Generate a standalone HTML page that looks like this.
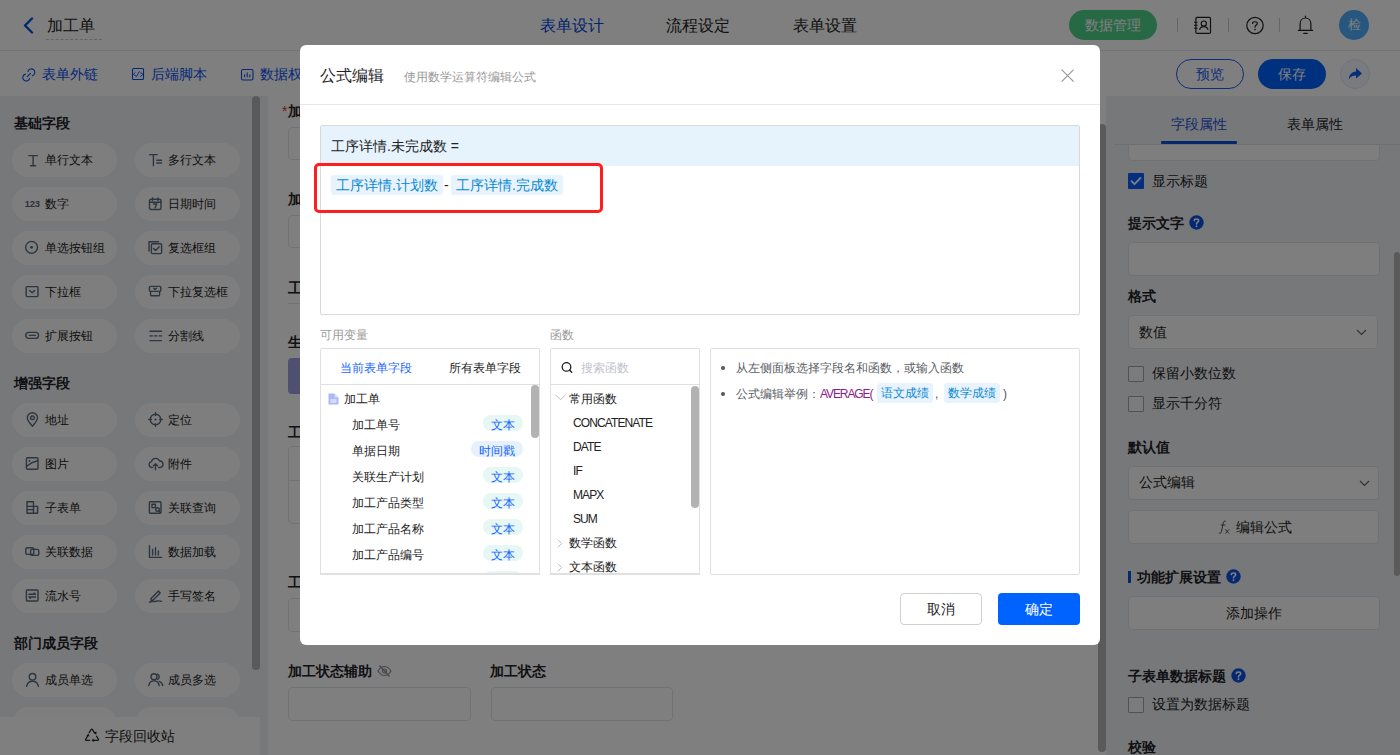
<!DOCTYPE html>
<html><head><meta charset="utf-8">
<style>
*{box-sizing:border-box;margin:0;padding:0}
html,body{width:1400px;height:755px;overflow:hidden;background:#fff;font-family:"Liberation Sans",sans-serif;color:#222}
.a{position:absolute;white-space:nowrap}
svg{display:block}
#hdr{position:absolute;left:0;top:0;width:1400px;height:51px;background:#fff;border-bottom:1px solid #e8e8e8}
#tb{position:absolute;left:0;top:51px;width:1400px;height:45px;background:#fff}
#side{position:absolute;left:0;top:96px;width:268px;height:659px;background:#eff1f5}
#canvas{position:absolute;left:268px;top:96px;width:838px;height:659px;background:#fff}
#rp{position:absolute;left:1106px;top:96px;width:294px;height:659px;background:#eff1f5}
#mask{position:absolute;left:0;top:0;width:1400px;height:755px;background:rgba(0,0,0,.5)}
#modal{position:absolute;left:300px;top:45px;width:800px;height:600px;background:#fff;border-radius:6px}
.pill{position:absolute;width:105px;height:34px;border-radius:17px;background:#fdfdfd}
.pill .ic{position:absolute;left:13px;top:9px;width:16px;height:16px}
.pill .t{position:absolute;left:33px;top:0;line-height:34px;font-size:12px;color:#1a1a1a}
.sh{position:absolute;left:14px;font-size:14px;font-weight:bold;color:#1f2329;line-height:20px}
</style></head><body>
<div id="hdr">
<svg class="a" style="left:22px;top:17px" width="12" height="17" viewBox="0 0 12 17"><path d="M10 1.5 L3 8.5 L10 15.5" fill="none" stroke="#0050e0" stroke-width="2.4" stroke-linecap="round" stroke-linejoin="round"/></svg>
<div class="a" style="left:47px;top:14px;font-size:16px;line-height:24px;color:#222">加工单</div>
<div class="a" style="left:46px;top:39px;width:56px;border-top:1px dashed #c8c8c8"></div>
<div class="a" style="left:540px;top:14px;font-size:16px;line-height:24px;color:#0046d8">表单设计</div>
<div class="a" style="left:666px;top:14px;font-size:16px;line-height:24px;color:#222">流程设定</div>
<div class="a" style="left:793px;top:14px;font-size:16px;line-height:24px;color:#222">表单设置</div>
<div class="a" style="left:1069px;top:10px;width:88px;height:30px;border-radius:15px;background:#4fd18b;color:#fff;font-size:14px;line-height:30px;text-align:center">数据管理</div>
<div class="a" style="left:1177px;top:18px;width:1px;height:14px;background:#ccc"></div>
<div class="a" style="left:1228px;top:18px;width:1px;height:14px;background:#ccc"></div>
<div class="a" style="left:1279px;top:18px;width:1px;height:14px;background:#ccc"></div>
<svg class="a" style="left:1192px;top:16px" width="20" height="19" viewBox="0 0 20 19"><rect x="3.9" y="1.4" width="14.6" height="16" rx="1.2" fill="none" stroke="#222" stroke-width="1.2"/><circle cx="11.8" cy="7.6" r="2.6" fill="none" stroke="#222" stroke-width="1.2"/><path d="M7.6 13.9C8 11.3 9.8 10.6 11.8 10.6S15.6 11.3 16 13.9" fill="none" stroke="#222" stroke-width="1.2"/><path d="M2 6.2h3.6M2 9.3h3.6M2 12.2h3.6" stroke="#222" stroke-width="1.1"/></svg>
<svg class="a" style="left:1245px;top:16px" width="19" height="19" viewBox="0 0 19 19"><circle cx="10" cy="9.5" r="8.2" fill="none" stroke="#222" stroke-width="1.2"/><path d="M7.6 7.4C7.6 5.2 12.3 5.2 12.3 7.4 12.3 9 10 9.2 10 11.2" fill="none" stroke="#222" stroke-width="1.2" stroke-linecap="round"/><circle cx="10" cy="13.6" r="0.8" fill="#222"/></svg>
<svg class="a" style="left:1297px;top:15px" width="17" height="20" viewBox="0 0 17 20"><path d="M8.5 1.2v1.4M3.1 15V8.8C3.1 5.3 5.5 3 8.5 3S13.9 5.3 13.9 8.8V15M1.4 15.4h14.2M6.8 18.4h3.4" fill="none" stroke="#222" stroke-width="1.2" stroke-linecap="round"/></svg>
<div class="a" style="left:1339px;top:10px;width:30px;height:30px;border-radius:15px;background:#4eaefc;color:#fff;font-size:13px;line-height:30px;text-align:center">检</div>
</div>
<div id="tb">
<svg class="a" style="left:22px;top:16px" width="15" height="16" viewBox="0 0 15 16"><path d="M5.92 4.49A3.5 3.5 0 1 1 10.21 8.78M7.68 11.41A3.5 3.5 0 1 1 3.39 7.12M5.2 9.6L8.4 6.3" fill="none" stroke="#0a50f0" stroke-width="1.1" stroke-linecap="round"/></svg>
<div class="a" style="left:42px;top:13px;font-size:14px;line-height:20px;color:#0a50f0">表单外链</div>
<svg class="a" style="left:131px;top:15px" width="14" height="15" viewBox="0 0 14 15"><rect x="1.5" y="2.5" width="11" height="11" rx="1" fill="none" stroke="#0a50f0" stroke-width="1.1"/><path d="M4.5 6.3L2.3 8.4 5.5 10.5 8.5 5.2M9.3 6.5L12 8.4 9.3 10.5" fill="none" stroke="#0a50f0" stroke-width="0.9" stroke-linejoin="round"/></svg>
<div class="a" style="left:151px;top:13px;font-size:14px;line-height:20px;color:#0a50f0">后端脚本</div>
<svg class="a" style="left:240px;top:15px" width="14" height="15" viewBox="0 0 14 15"><rect x="1.5" y="3.5" width="11.5" height="10.5" rx="1.5" fill="none" stroke="#0a50f0" stroke-width="1.1"/><path d="M4.6 11.2V8.4M7.2 11.2V6.4M9.8 11.2V8.4" stroke="#0a50f0" stroke-width="1.1"/></svg>
<div class="a" style="left:260px;top:13px;font-size:14px;line-height:20px;color:#0a50f0">数据权限</div>
<div class="a" style="left:1176px;top:8px;width:68px;height:30px;border-radius:15px;border:1px solid #1e5cf0;color:#1e5cf0;font-size:14px;line-height:28px;text-align:center">预览</div>
<div class="a" style="left:1258px;top:8px;width:68px;height:30px;border-radius:15px;background:#0062ff;color:#fff;font-size:14px;line-height:30px;text-align:center">保存</div>
<div class="a" style="left:1340px;top:8px;width:30px;height:30px;border-radius:15px;border:1px solid #dfe6f5;background:#f3f6fd"></div>
<svg class="a" style="left:1347px;top:15px" width="16" height="16" viewBox="0 0 16 16"><path d="M9 2 L15 7.5 L9 12.5 V9.5 C5.5 9.5 3.5 10.5 1.8 13.5 C2 9 4.5 5.8 9 5.5 Z" fill="#0b5ef5"/></svg>
</div>
<div id="side">
<div class="sh" style="top:17px">基础字段</div>
<div class="sh" style="top:277px">增强字段</div>
<div class="sh" style="top:537px">部门成员字段</div>
<div class="pill" style="left:12px;top:47px"><svg class="ic" viewBox="0 0 16 16"><path d="M3.8 3.6h8.6M8.1 3.6v10.2M5.6 13.8h5" fill="none" stroke="#5b6a7e" stroke-width="1.4" stroke-linecap="round" stroke-linejoin="round"/></svg><div class="t">单行文本</div></div>
<div class="pill" style="left:135px;top:47px"><svg class="ic" viewBox="0 0 16 16"><path d="M1.6 2.6h7.6M5.4 2.6v11.2M8.8 8.2h4.8M8.8 11h4.8" fill="none" stroke="#5b6a7e" stroke-width="1.4" stroke-linecap="round" stroke-linejoin="round"/></svg><div class="t">多行文本</div></div>
<div class="pill" style="left:12px;top:91px"><svg class="ic" viewBox="0 0 16 16"><text x="-0.2" y="11" font-family="Liberation Sans" font-weight="bold" font-size="9.4" fill="#56657a" letter-spacing="-0.3">123</text></svg><div class="t">数字</div></div>
<div class="pill" style="left:135px;top:91px"><svg class="ic" viewBox="0 0 16 16"><rect x="1.5" y="3.3" width="11.5" height="10.2" rx="1.5" fill="none" stroke="#5b6a7e" stroke-width="1.4" stroke-linecap="round" stroke-linejoin="round"/><path d="M4.5 2v2.6M10 2v2.6M1.5 6.2h11.5M5.5 8h3.2l-1.6 3.8" fill="none" stroke="#5b6a7e" stroke-width="1.4" stroke-linecap="round" stroke-linejoin="round"/></svg><div class="t">日期时间</div></div>
<div class="pill" style="left:12px;top:135px"><svg class="ic" viewBox="0 0 16 16"><circle cx="6.6" cy="7.3" r="5.9" fill="none" stroke="#5b6a7e" stroke-width="1.4" stroke-linecap="round" stroke-linejoin="round"/><circle cx="6.6" cy="7.3" r="1.4" fill="#56657a"/></svg><div class="t">单选按钮组</div></div>
<div class="pill" style="left:135px;top:135px"><svg class="ic" viewBox="0 0 16 16"><path d="M1 11V1.8h9.5" fill="none" stroke="#5b6a7e" stroke-width="1.4" stroke-linecap="round" stroke-linejoin="round"/><rect x="3.4" y="3.8" width="10.2" height="9.8" rx="1" fill="none" stroke="#5b6a7e" stroke-width="1.4" stroke-linecap="round" stroke-linejoin="round"/><path d="M5.6 8.5l2 2 3.6-3.8" fill="none" stroke="#5b6a7e" stroke-width="1.4" stroke-linecap="round" stroke-linejoin="round"/></svg><div class="t">复选框组</div></div>
<div class="pill" style="left:12px;top:179px"><svg class="ic" viewBox="0 0 16 16"><rect x="1.2" y="2.6" width="11.8" height="10" rx="1" fill="none" stroke="#5b6a7e" stroke-width="1.4" stroke-linecap="round" stroke-linejoin="round"/><path d="M4.6 6.4l2.5 2.4 2.5-2.4" fill="none" stroke="#5b6a7e" stroke-width="1.4" stroke-linecap="round" stroke-linejoin="round"/></svg><div class="t">下拉框</div></div>
<div class="pill" style="left:135px;top:179px"><svg class="ic" viewBox="0 0 16 16"><rect x="1.4" y="2.4" width="11.4" height="5" rx="1" fill="none" stroke="#5b6a7e" stroke-width="1.4" stroke-linecap="round" stroke-linejoin="round"/><path d="M2.6 7.4v3.6c0 .5.3.8.8.8h7.4c.5 0 .8-.3.8-.8V7.4" fill="none" stroke="#5b6a7e" stroke-width="1.4" stroke-linecap="round" stroke-linejoin="round"/><path d="M5.8 4.2l1.3 1.3 1.3-1.3" fill="none" stroke="#5b6a7e" stroke-width="1.4" stroke-linecap="round" stroke-linejoin="round"/></svg><div class="t">下拉复选框</div></div>
<div class="pill" style="left:12px;top:223px"><svg class="ic" viewBox="0 0 16 16"><rect x="0.8" y="4.4" width="12.8" height="6" rx="3" fill="none" stroke="#5b6a7e" stroke-width="1.4" stroke-linecap="round" stroke-linejoin="round"/><path d="M4.3 7.4h6" fill="none" stroke="#5b6a7e" stroke-width="1.4" stroke-linecap="round" stroke-linejoin="round"/></svg><div class="t">扩展按钮</div></div>
<div class="pill" style="left:135px;top:223px"><svg class="ic" viewBox="0 0 16 16"><path d="M2 3.2h11.5M2 12.6h11.5M2 7.9h2.4M6.6 7.9h2.3M11.1 7.9h2.4" fill="none" stroke="#5b6a7e" stroke-width="1.4" stroke-linecap="round" stroke-linejoin="round"/></svg><div class="t">分割线</div></div>
<div class="pill" style="left:12px;top:307px"><svg class="ic" viewBox="0 0 16 16"><path d="M7.4 14.2C4.5 11 2.3 8.5 2.3 5.8a5.1 5.1 0 0 1 10.2 0c0 2.7-2.2 5.2-5.1 8.4z" fill="none" stroke="#5b6a7e" stroke-width="1.4" stroke-linecap="round" stroke-linejoin="round"/><circle cx="7.4" cy="5.8" r="1.8" fill="none" stroke="#5b6a7e" stroke-width="1.4" stroke-linecap="round" stroke-linejoin="round"/></svg><div class="t">地址</div></div>
<div class="pill" style="left:135px;top:307px"><svg class="ic" viewBox="0 0 16 16"><circle cx="7.5" cy="7.5" r="5.3" fill="none" stroke="#5b6a7e" stroke-width="1.4" stroke-linecap="round" stroke-linejoin="round"/><path d="M7.5 0.8v2.6M7.5 11.6v2.6M0.8 7.5h2.6M11.6 7.5h2.6" fill="none" stroke="#5b6a7e" stroke-width="1.4" stroke-linecap="round" stroke-linejoin="round"/><circle cx="7.5" cy="7.5" r="1" fill="#56657a"/></svg><div class="t">定位</div></div>
<div class="pill" style="left:12px;top:351px"><svg class="ic" viewBox="0 0 16 16"><rect x="1.4" y="1.8" width="11.6" height="11.4" rx="1.2" fill="none" stroke="#5b6a7e" stroke-width="1.4" stroke-linecap="round" stroke-linejoin="round"/><path d="M1.6 10.4C4.5 8 6 6 12.8 4.8" fill="none" stroke="#5b6a7e" stroke-width="1.4" stroke-linecap="round" stroke-linejoin="round"/><circle cx="4.5" cy="5" r="0.9" fill="#56657a"/></svg><div class="t">图片</div></div>
<div class="pill" style="left:135px;top:351px"><svg class="ic" viewBox="0 0 16 16"><path d="M4.5 11.5H3.8A3 3 0 0 1 3.5 5.6 4.2 4.2 0 0 1 11.5 5a3.2 3.2 0 0 1 .4 6.5h-1.2M7.5 13.8V8M5.4 9.8l2.1-2 2.1 2" fill="none" stroke="#5b6a7e" stroke-width="1.4" stroke-linecap="round" stroke-linejoin="round"/></svg><div class="t">附件</div></div>
<div class="pill" style="left:12px;top:395px"><svg class="ic" viewBox="0 0 16 16"><path d="M2 1.8h6.5v4.6H2zM2 6.4h10.6v6.8H2zM2 9.6h6.5M8.5 6.4v6.8" fill="none" stroke="#5b6a7e" stroke-width="1.4" stroke-linecap="round" stroke-linejoin="round"/></svg><div class="t">子表单</div></div>
<div class="pill" style="left:135px;top:395px"><svg class="ic" viewBox="0 0 16 16"><rect x="1.4" y="1.8" width="11.6" height="11.4" rx="1" fill="none" stroke="#5b6a7e" stroke-width="1.4" stroke-linecap="round" stroke-linejoin="round"/><path d="M4 4.2h3.4v3.4H4z" fill="none" stroke="#5b6a7e" stroke-width="1.4" stroke-linecap="round" stroke-linejoin="round"/><circle cx="9.5" cy="9.6" r="1.8" fill="none" stroke="#5b6a7e" stroke-width="1.4" stroke-linecap="round" stroke-linejoin="round"/><path d="M10.8 10.9l1.6 1.6" fill="none" stroke="#5b6a7e" stroke-width="1.4" stroke-linecap="round" stroke-linejoin="round"/></svg><div class="t">关联查询</div></div>
<div class="pill" style="left:12px;top:439px"><svg class="ic" viewBox="0 0 16 16"><rect x="0.8" y="3.8" width="8" height="6.6" rx="1.5" fill="none" stroke="#5b6a7e" stroke-width="1.4" stroke-linecap="round" stroke-linejoin="round"/><rect x="5.6" y="5.4" width="8.2" height="6" rx="1.5" fill="none" stroke="#5b6a7e" stroke-width="1.4" stroke-linecap="round" stroke-linejoin="round"/></svg><div class="t">关联数据</div></div>
<div class="pill" style="left:135px;top:439px"><svg class="ic" viewBox="0 0 16 16"><path d="M1.5 1.8v11.6h12.2M4.6 11V5.5M7.5 11V3.6M10.4 11V7" fill="none" stroke="#5b6a7e" stroke-width="1.4" stroke-linecap="round" stroke-linejoin="round"/></svg><div class="t">数据加载</div></div>
<div class="pill" style="left:12px;top:483px"><svg class="ic" viewBox="0 0 16 16"><rect x="1.4" y="2" width="11.6" height="11" rx="1" fill="none" stroke="#5b6a7e" stroke-width="1.4" stroke-linecap="round" stroke-linejoin="round"/><path d="M3.8 6.2h6.6l-1.3-1.3M10.6 9h-6.6l1.3 1.3" fill="none" stroke="#5b6a7e" stroke-width="1.4" stroke-linecap="round" stroke-linejoin="round"/></svg><div class="t">流水号</div></div>
<div class="pill" style="left:135px;top:483px"><svg class="ic" viewBox="0 0 16 16"><path d="M3 10.5l7.4-7.4 1.8 1.8-7.4 7.4H3zM1.5 14.2c2.5-1.5 4-.2 6-.8 1.5-.4 3-1 6 0" fill="none" stroke="#5b6a7e" stroke-width="1.4" stroke-linecap="round" stroke-linejoin="round"/></svg><div class="t">手写签名</div></div>
<div class="pill" style="left:12px;top:567px"><svg class="ic" viewBox="0 0 16 16"><circle cx="7.5" cy="4.8" r="3.3" fill="none" stroke="#5b6a7e" stroke-width="1.4" stroke-linecap="round" stroke-linejoin="round"/><path d="M1.6 14.3c.6-3.3 3-5.1 5.9-5.1s5.3 1.8 5.9 5.1" fill="none" stroke="#5b6a7e" stroke-width="1.4" stroke-linecap="round" stroke-linejoin="round"/></svg><div class="t">成员单选</div></div>
<div class="pill" style="left:135px;top:567px"><svg class="ic" viewBox="0 0 16 16"><circle cx="6" cy="4.8" r="3" fill="none" stroke="#5b6a7e" stroke-width="1.4" stroke-linecap="round" stroke-linejoin="round"/><path d="M0.8 13.6c.5-3 2.6-4.7 5.2-4.7s4.7 1.7 5.2 4.7M9.6 2.2a3 3 0 0 1 0 5.3M11.3 9.4c1.8.6 3 2 3.4 4.2" fill="none" stroke="#5b6a7e" stroke-width="1.4" stroke-linecap="round" stroke-linejoin="round"/></svg><div class="t">成员多选</div></div>
<div class="pill" style="left:12px;top:611px"><svg class="ic" viewBox="0 0 16 16"><circle cx="6" cy="4.8" r="3" fill="none" stroke="#5b6a7e" stroke-width="1.4" stroke-linecap="round" stroke-linejoin="round"/><path d="M0.8 13.6c.5-3 2.6-4.7 5.2-4.7s4.7 1.7 5.2 4.7M9.6 2.2a3 3 0 0 1 0 5.3M11.3 9.4c1.8.6 3 2 3.4 4.2" fill="none" stroke="#5b6a7e" stroke-width="1.4" stroke-linecap="round" stroke-linejoin="round"/></svg><div class="t">部门单选</div></div>
<div class="pill" style="left:135px;top:611px"><svg class="ic" viewBox="0 0 16 16"><circle cx="6" cy="4.8" r="3" fill="none" stroke="#5b6a7e" stroke-width="1.4" stroke-linecap="round" stroke-linejoin="round"/><path d="M0.8 13.6c.5-3 2.6-4.7 5.2-4.7s4.7 1.7 5.2 4.7M9.6 2.2a3 3 0 0 1 0 5.3M11.3 9.4c1.8.6 3 2 3.4 4.2" fill="none" stroke="#5b6a7e" stroke-width="1.4" stroke-linecap="round" stroke-linejoin="round"/></svg><div class="t">部门多选</div></div>
<div class="a" style="left:252px;top:0;width:8px;height:574px;border-radius:4px;background:#b4b4b4"></div>
<div class="a" style="left:0;top:621px;width:260px;height:38px;background:#fff"></div>
<svg class="a" style="left:83px;top:630px" width="18" height="17" viewBox="0 0 18 17"><path d="M6.2 6.6L8.1 3.6Q8.8 2.6 9.5 3.6L11.6 7M13.6 10.2L15.4 13.3Q15.8 14.3 14.8 14.3L10.2 14.3M6.6 14.3L3.2 14.3Q2.2 14.3 2.7 13.3L4.8 9.8" fill="none" stroke="#222" stroke-width="1.2" stroke-linecap="round" stroke-linejoin="round"/><path d="M10.4 6.4L13.2 8.8 13.6 5.6z M10.6 12.4L8.6 14.3 10.6 16.2z M3.4 9.8L6.4 10.4 5.6 7.4z" fill="#222"/></svg>
<div class="a" style="left:105px;top:630px;font-size:14px;line-height:20px;color:#222">字段回收站</div>
</div>
<div id="canvas">
<div class="a" style="left:14px;top:5px;font-size:14px;line-height:20px;color:#e03030">*</div>
<div class="a" style="left:20px;top:5px;font-size:14px;line-height:20px;color:#1f2329;font-weight:bold">加工单号</div>
<div class="a" style="left:20px;top:31px;width:183px;height:33px;border:1px solid #e3e5e8;border-radius:4px;background:#fff"></div>
<div class="a" style="left:20px;top:93px;font-size:14px;line-height:20px;color:#1f2329;font-weight:bold">加工日期</div>
<div class="a" style="left:20px;top:119px;width:183px;height:33px;border:1px solid #e3e5e8;border-radius:4px;background:#fff"></div>
<div class="a" style="left:20px;top:181px;font-size:15px;line-height:22px;color:#1f2329;font-weight:bold">工序详情</div>
<div class="a" style="left:20px;top:207px;width:792px;height:1px;background:#e5e6eb"></div>
<div class="a" style="left:20px;top:236px;font-size:14px;line-height:20px;color:#1f2329;font-weight:bold">生产工序</div>
<div class="a" style="left:20px;top:262px;width:100px;height:36px;border-radius:4px;background:#9ea0e0"></div>
<div class="a" style="left:20px;top:326px;font-size:14px;line-height:20px;color:#1f2329;font-weight:bold">工序明细</div>
<div class="a" style="left:20px;top:350px;width:792px;height:78px;border:1px solid #e3e5e8;border-radius:4px;background:#fff"></div>
<div class="a" style="left:20px;top:384px;width:792px;height:1px;background:#e3e5e8"></div>
<div class="a" style="left:20px;top:476px;font-size:14px;line-height:20px;color:#1f2329;font-weight:bold">工序备注</div>
<div class="a" style="left:20px;top:502px;width:183px;height:34px;border:1px solid #e3e5e8;border-radius:4px;background:#fff"></div>
<div class="a" style="left:20px;top:565px;font-size:14px;line-height:20px;color:#1f2329;font-weight:bold">加工状态辅助</div>
<svg class="a" style="left:109px;top:568px" width="15" height="14" viewBox="0 0 15 14"><path d="M1 7C3 3.5 5 2.5 7.5 2.5S12 3.5 14 7C12 10.5 10 11.5 7.5 11.5S3 10.5 1 7z" fill="none" stroke="#8a8f99" stroke-width="1.2"/><circle cx="7.5" cy="7" r="2" fill="none" stroke="#8a8f99" stroke-width="1.2"/><path d="M2.5 1.5l10 11" stroke="#8a8f99" stroke-width="1.2"/></svg>
<div class="a" style="left:222px;top:565px;font-size:14px;line-height:20px;color:#1f2329;font-weight:bold">加工状态</div>
<div class="a" style="left:20px;top:591px;width:183px;height:34px;border:1px solid #e3e5e8;border-radius:4px;background:#fff"></div>
<div class="a" style="left:223px;top:591px;width:182px;height:34px;border:1px solid #e3e5e8;border-radius:4px;background:#fff"></div>
<div class="a" style="left:830px;top:28px;width:8px;height:628px;border-radius:4px;background:#b4b4b4"></div>
</div>
<div id="rp">
<div class="a" style="left:22px;top:4px;width:252px;height:61px;border:1px solid #e1e3e6;border-radius:4px;background:#fdfdfd"></div>
<div class="a" style="left:0;top:0;width:294px;height:48px;background:#eff1f5"></div>
<div class="a" style="left:65px;top:18px;font-size:14px;line-height:20px;color:#1a50d8">字段属性</div>
<div class="a" style="left:181px;top:18px;font-size:14px;line-height:20px;color:#222">表单属性</div>
<div class="a" style="left:8px;top:48px;width:286px;height:1px;background:#dcdee2"></div>
<div class="a" style="left:55px;top:45px;width:76px;height:3px;background:#0a4fd6;border-radius:1px"></div>
<div class="a" style="left:22px;top:77px;width:16px;height:16px;background:#0a5cff;border-radius:1px"></div>
<svg class="a" style="left:22px;top:77px" width="16" height="16" viewBox="0 0 16 16"><path d="M3.5 8.2l3 3 6-6.2" fill="none" stroke="#fff" stroke-width="1.8" stroke-linecap="round" stroke-linejoin="round"/></svg>
<div class="a" style="left:46px;top:75px;font-size:14px;line-height:20px;color:#222">显示标题</div>
<div class="a" style="left:22px;top:117px;font-size:14px;line-height:20px;color:#1f2329;font-weight:bold">提示文字</div>
<svg class="a" style="left:83px;top:119px" width="15" height="15" viewBox="0 0 15 15"><circle cx="7.5" cy="7.5" r="7.2" fill="#0a50e0"/><path d="M5.3 5.6C5.3 3.4 9.7 3.4 9.7 5.6 9.7 7.2 7.5 7.2 7.5 9" fill="none" stroke="#fff" stroke-width="1.6" stroke-linecap="round"/><circle cx="7.5" cy="11.2" r="0.95" fill="#fff"/></svg>
<div class="a" style="left:22px;top:146px;width:252px;height:34px;border:1px solid #e1e3e6;border-radius:4px;background:#fdfdfd"></div>
<div class="a" style="left:22px;top:190px;font-size:14px;line-height:20px;color:#1f2329;font-weight:bold">格式</div>
<div class="a" style="left:22px;top:219px;width:250px;height:34px;border:1px solid #e1e3e6;border-radius:4px;background:#fdfdfd"></div>
<div class="a" style="left:33px;top:226px;font-size:14px;line-height:20px;color:#222">数值</div>
<svg class="a" style="left:250px;top:233px" width="11" height="7" viewBox="0 0 11 7"><path d="M1 1l4.5 4.5L10 1" fill="none" stroke="#666" stroke-width="1.2"/></svg>
<div class="a" style="left:22px;top:270px;width:16px;height:16px;border:1px solid #9aa3b3;border-radius:1px;background:#f6f7f9"></div>
<div class="a" style="left:46px;top:267px;font-size:14px;line-height:20px;color:#222">保留小数位数</div>
<div class="a" style="left:22px;top:300px;width:16px;height:16px;border:1px solid #9aa3b3;border-radius:1px;background:#f6f7f9"></div>
<div class="a" style="left:46px;top:297px;font-size:14px;line-height:20px;color:#222">显示千分符</div>
<div class="a" style="left:22px;top:341px;font-size:14px;line-height:20px;color:#1f2329;font-weight:bold">默认值</div>
<div class="a" style="left:22px;top:370px;width:251px;height:34px;border:1px solid #e1e3e6;border-radius:4px;background:#fdfdfd"></div>
<div class="a" style="left:33px;top:376px;font-size:14px;line-height:20px;color:#222">公式编辑</div>
<svg class="a" style="left:253px;top:384px" width="11" height="7" viewBox="0 0 11 7"><path d="M1 1l4.5 4.5L10 1" fill="none" stroke="#666" stroke-width="1.2"/></svg>
<div class="a" style="left:22px;top:414px;width:251px;height:34px;border:1px solid #e1e3e6;border-radius:4px;background:#fdfdfd"></div>
<svg class="a" style="left:111px;top:424px" width="14" height="16" viewBox="0 0 14 16"><path d="M8.6 1.2C7.6 0.8 6.6 1.3 6.3 2.6L4.4 11.8C4.1 13.2 3.2 13.6 2.2 13.1M4.2 5h3.8" fill="none" stroke="#555" stroke-width="1" stroke-linecap="round"/><path d="M8.6 9.6l3.2 3.6M11.8 9.6l-3.2 3.6" stroke="#555" stroke-width="1" stroke-linecap="round"/></svg>
<div class="a" style="left:130px;top:421px;font-size:14px;line-height:20px;color:#222">编辑公式</div>
<div class="a" style="left:22px;top:475px;width:3px;height:12px;background:#0a4fd6"></div>
<div class="a" style="left:31px;top:471px;font-size:14px;line-height:20px;color:#1f2329;font-weight:bold">功能扩展设置</div>
<svg class="a" style="left:120px;top:473px" width="15" height="15" viewBox="0 0 15 15"><circle cx="7.5" cy="7.5" r="7.2" fill="#0a50e0"/><path d="M5.3 5.6C5.3 3.4 9.7 3.4 9.7 5.6 9.7 7.2 7.5 7.2 7.5 9" fill="none" stroke="#fff" stroke-width="1.6" stroke-linecap="round"/><circle cx="7.5" cy="11.2" r="0.95" fill="#fff"/></svg>
<div class="a" style="left:22px;top:500px;width:252px;height:34px;border:1px solid #e1e3e6;border-radius:4px;background:#fdfdfd"></div>
<div class="a" style="left:120px;top:507px;font-size:14px;line-height:20px;color:#222">添加操作</div>
<div class="a" style="left:22px;top:570px;font-size:14px;line-height:20px;color:#1f2329;font-weight:bold">子表单数据标题</div>
<svg class="a" style="left:125px;top:572px" width="15" height="15" viewBox="0 0 15 15"><circle cx="7.5" cy="7.5" r="7.2" fill="#0a50e0"/><path d="M5.3 5.6C5.3 3.4 9.7 3.4 9.7 5.6 9.7 7.2 7.5 7.2 7.5 9" fill="none" stroke="#fff" stroke-width="1.6" stroke-linecap="round"/><circle cx="7.5" cy="11.2" r="0.95" fill="#fff"/></svg>
<div class="a" style="left:22px;top:601px;width:16px;height:16px;border:1px solid #9aa3b3;border-radius:1px;background:#f6f7f9"></div>
<div class="a" style="left:46px;top:598px;font-size:14px;line-height:20px;color:#222">设置为数据标题</div>
<div class="a" style="left:22px;top:641px;font-size:14px;line-height:20px;color:#1f2329;font-weight:bold">校验</div>
<div class="a" style="left:288px;top:156px;width:6px;height:324px;background:#b4b4b4;border-radius:3px"></div>
</div>
<div id="mask"></div>
<div id="modal">
<div class="a" style="left:20px;top:19px;font-size:16px;line-height:24px;color:#1f2329">公式编辑</div>
<div class="a" style="left:104px;top:23px;font-size:12px;line-height:18px;color:#999">使用数学运算符编辑公式</div>
<svg class="a" style="left:760px;top:23px" width="15" height="15" viewBox="0 0 15 15"><path d="M1.6 1.6l12 12M13.6 1.6l-12 12" stroke="#999" stroke-width="1.2"/></svg>
<div class="a" style="left:0px;top:59px;width:800px;height:1px;background:#e8e8e8"></div>
<div class="a" style="left:20px;top:80px;width:760px;height:190px;border:1px solid #d9d9d9;border-radius:2px;background:#fff"></div>
<div class="a" style="left:21px;top:81px;width:758px;height:40px;background:#e6f3fd"></div>
<div class="a" style="left:31px;top:91px;font-size:14px;line-height:20px;color:#222">工序详情.未完成数 =</div>
<div class="a" style="left:14px;top:118px;width:289px;height:50px;border:3px solid #ff1d1d;border-radius:5px"></div>
<div class="a" style="left:31px;top:130px;font-size:14px;line-height:20px;color:#0a8ad2;background:#e8f3fd;border-radius:3px;padding:0 5px;height:20px">工序详情.计划数</div>
<div class="a" style="left:144px;top:130px;font-size:14px;line-height:20px;color:#222">-</div>
<div class="a" style="left:151px;top:130px;font-size:14px;line-height:20px;color:#0a8ad2;background:#e8f3fd;border-radius:3px;padding:0 5px;height:20px">工序详情.完成数</div>
<div class="a" style="left:20px;top:281px;font-size:12px;line-height:18px;color:#9a9a9a">可用变量</div>
<div class="a" style="left:250px;top:281px;font-size:12px;line-height:18px;color:#9a9a9a">函数</div>
<div class="a" style="left:20px;top:303px;width:220px;height:227px;border:1px solid #e0e0e0;border-radius:2px;background:#fff;overflow:hidden"></div>
<div class="a" style="left:40px;top:314px;font-size:12px;line-height:18px;color:#1a66ff">当前表单字段</div>
<div class="a" style="left:149px;top:314px;font-size:12px;line-height:18px;color:#222">所有表单字段</div>
<div class="a" style="left:21px;top:339px;width:218px;height:1px;background:#e0e0e0"></div>
<svg class="a" style="left:28px;top:348px" width="11" height="12" viewBox="0 0 11 12"><path d="M0.5 0.5h6l4 4v7h-10z" fill="#a9b9f5"/><path d="M2.5 7h6M2.5 9h6" stroke="#fff" stroke-width="1"/><path d="M6.5 0.5v4h4" fill="#d8e0fb"/></svg>
<div class="a" style="left:44px;top:345px;font-size:12px;line-height:18px;color:#222">加工单</div>
<div class="a" style="left:52px;top:371px;font-size:12px;line-height:18px;color:#222">加工单号</div>
<div class="a" style="left:183px;top:370px;width:40px;height:16px;background:#e6f7f5;border-radius:8px"></div>
<div class="a" style="left:183px;top:371px;width:40px;text-align:center;font-size:12px;line-height:18px;color:#1466ff">文本</div>
<div class="a" style="left:52px;top:397px;font-size:12px;line-height:18px;color:#222">单据日期</div>
<div class="a" style="left:171px;top:396px;width:52px;height:16px;background:#e7f1fe;border-radius:8px"></div>
<div class="a" style="left:171px;top:397px;width:52px;text-align:center;font-size:12px;line-height:18px;color:#1466ff">时间戳</div>
<div class="a" style="left:52px;top:423px;font-size:12px;line-height:18px;color:#222">关联生产计划</div>
<div class="a" style="left:183px;top:422px;width:40px;height:16px;background:#e6f7f5;border-radius:8px"></div>
<div class="a" style="left:183px;top:423px;width:40px;text-align:center;font-size:12px;line-height:18px;color:#1466ff">文本</div>
<div class="a" style="left:52px;top:449px;font-size:12px;line-height:18px;color:#222">加工产品类型</div>
<div class="a" style="left:183px;top:448px;width:40px;height:16px;background:#e6f7f5;border-radius:8px"></div>
<div class="a" style="left:183px;top:449px;width:40px;text-align:center;font-size:12px;line-height:18px;color:#1466ff">文本</div>
<div class="a" style="left:52px;top:475px;font-size:12px;line-height:18px;color:#222">加工产品名称</div>
<div class="a" style="left:183px;top:474px;width:40px;height:16px;background:#e6f7f5;border-radius:8px"></div>
<div class="a" style="left:183px;top:475px;width:40px;text-align:center;font-size:12px;line-height:18px;color:#1466ff">文本</div>
<div class="a" style="left:52px;top:501px;font-size:12px;line-height:18px;color:#222">加工产品编号</div>
<div class="a" style="left:183px;top:500px;width:40px;height:16px;background:#e6f7f5;border-radius:8px"></div>
<div class="a" style="left:183px;top:501px;width:40px;text-align:center;font-size:12px;line-height:18px;color:#1466ff">文本</div>
<div class="a" style="left:52px;top:527px;font-size:12px;line-height:18px;color:#222">加工数量</div>
<div class="a" style="left:183px;top:526px;width:40px;height:16px;background:#e6f7f5;border-radius:8px"></div>
<div class="a" style="left:183px;top:527px;width:40px;text-align:center;font-size:12px;line-height:18px;color:#1466ff">数字</div>
<div class="a" style="left:21px;top:529px;width:218px;height:26px;background:#fff"></div>
<div class="a" style="left:20px;top:528px;width:220px;height:2px;background:#e0e0e0"></div>
<div class="a" style="left:231px;top:340px;width:8px;height:53px;background:#b3b3b3;border-radius:4px"></div>
<div class="a" style="left:250px;top:303px;width:150px;height:227px;border:1px solid #e0e0e0;border-radius:2px;background:#fff"></div>
<svg class="a" style="left:261px;top:317px" width="13" height="13" viewBox="0 0 13 13"><circle cx="5.5" cy="4.9" r="4.3" fill="none" stroke="#222" stroke-width="1.3"/><path d="M8.5 8l2.2 2.2" stroke="#222" stroke-width="1.4" stroke-linecap="round"/></svg>
<div class="a" style="left:281px;top:314px;font-size:12px;line-height:18px;color:#c0c4cc">搜索函数</div>
<div class="a" style="left:251px;top:339px;width:148px;height:1px;background:#e0e0e0"></div>
<svg class="a" style="left:255px;top:349px" width="11" height="7" viewBox="0 0 11 7"><path d="M0.5 0.8l5 5 5-5" fill="none" stroke="#bbb" stroke-width="1"/></svg>
<div class="a" style="left:269px;top:345px;font-size:12px;line-height:18px;color:#222">常用函数</div>
<div class="a" style="left:273px;top:369px;font-size:12px;line-height:18px;color:#222;letter-spacing:-0.9px">CONCATENATE</div>
<div class="a" style="left:273px;top:393px;font-size:12px;line-height:18px;color:#222;letter-spacing:-0.9px">DATE</div>
<div class="a" style="left:273px;top:417px;font-size:12px;line-height:18px;color:#222;letter-spacing:-0.9px">IF</div>
<div class="a" style="left:273px;top:441px;font-size:12px;line-height:18px;color:#222;letter-spacing:-0.9px">MAPX</div>
<div class="a" style="left:273px;top:465px;font-size:12px;line-height:18px;color:#222;letter-spacing:-0.9px">SUM</div>
<svg class="a" style="left:257px;top:494px" width="6" height="9" viewBox="0 0 6 9"><path d="M1 0.8l3.6 3.7L1 8.2" fill="none" stroke="#bbb" stroke-width="1"/></svg>
<div class="a" style="left:269px;top:489px;font-size:12px;line-height:18px;color:#222">数学函数</div>
<svg class="a" style="left:257px;top:518px" width="6" height="9" viewBox="0 0 6 9"><path d="M1 0.8l3.6 3.7L1 8.2" fill="none" stroke="#bbb" stroke-width="1"/></svg>
<div class="a" style="left:269px;top:513px;font-size:12px;line-height:18px;color:#222">文本函数</div>
<div class="a" style="left:251px;top:529px;width:148px;height:26px;background:#fff"></div>
<div class="a" style="left:250px;top:528px;width:150px;height:2px;background:#e0e0e0"></div>
<div class="a" style="left:391px;top:341px;width:8px;height:122px;background:#b3b3b3;border-radius:4px"></div>
<div class="a" style="left:410px;top:303px;width:370px;height:227px;border:1px solid #e0e0e0;border-radius:2px;background:#fff"></div>
<div class="a" style="left:421px;top:321px;width:4px;height:4px;background:#555;border-radius:2px"></div>
<div class="a" style="left:436px;top:314px;font-size:12px;line-height:18px;color:#5a5e66">从左侧面板选择字段名和函数，或输入函数</div>
<div class="a" style="left:421px;top:347px;width:4px;height:4px;background:#555;border-radius:2px"></div>
<div class="a" style="left:436px;top:340px;font-size:12px;line-height:18px;color:#5a5e66">公式编辑举例：</div><div class="a" style="left:520px;top:340px;font-size:12px;line-height:18px;color:#8b1a8b;letter-spacing:-1.1px">AVERAGE(</div>
<div class="a" style="left:577px;top:338px;width:56px;font-size:12px;line-height:20px;height:20px;color:#0a8ad2;background:#e8f3fd;border-radius:3px;text-align:center">语文成绩</div>
<div class="a" style="left:635px;top:340px;font-size:12px;line-height:18px;color:#555">,</div>
<div class="a" style="left:644px;top:338px;width:56px;font-size:12px;line-height:20px;height:20px;color:#0a8ad2;background:#e8f3fd;border-radius:3px;text-align:center">数学成绩</div>
<div class="a" style="left:703px;top:340px;font-size:12px;line-height:18px;color:#555">)</div>
<div class="a" style="left:600px;top:548px;width:82px;height:32px;border:1px solid #d0d0d0;border-radius:4px;font-size:14px;line-height:30px;text-align:center;color:#222;background:#fff">取消</div>
<div class="a" style="left:698px;top:548px;width:82px;height:32px;border-radius:4px;font-size:14px;line-height:32px;text-align:center;color:#fff;background:#0062ff">确定</div>
</div>
</body></html>
